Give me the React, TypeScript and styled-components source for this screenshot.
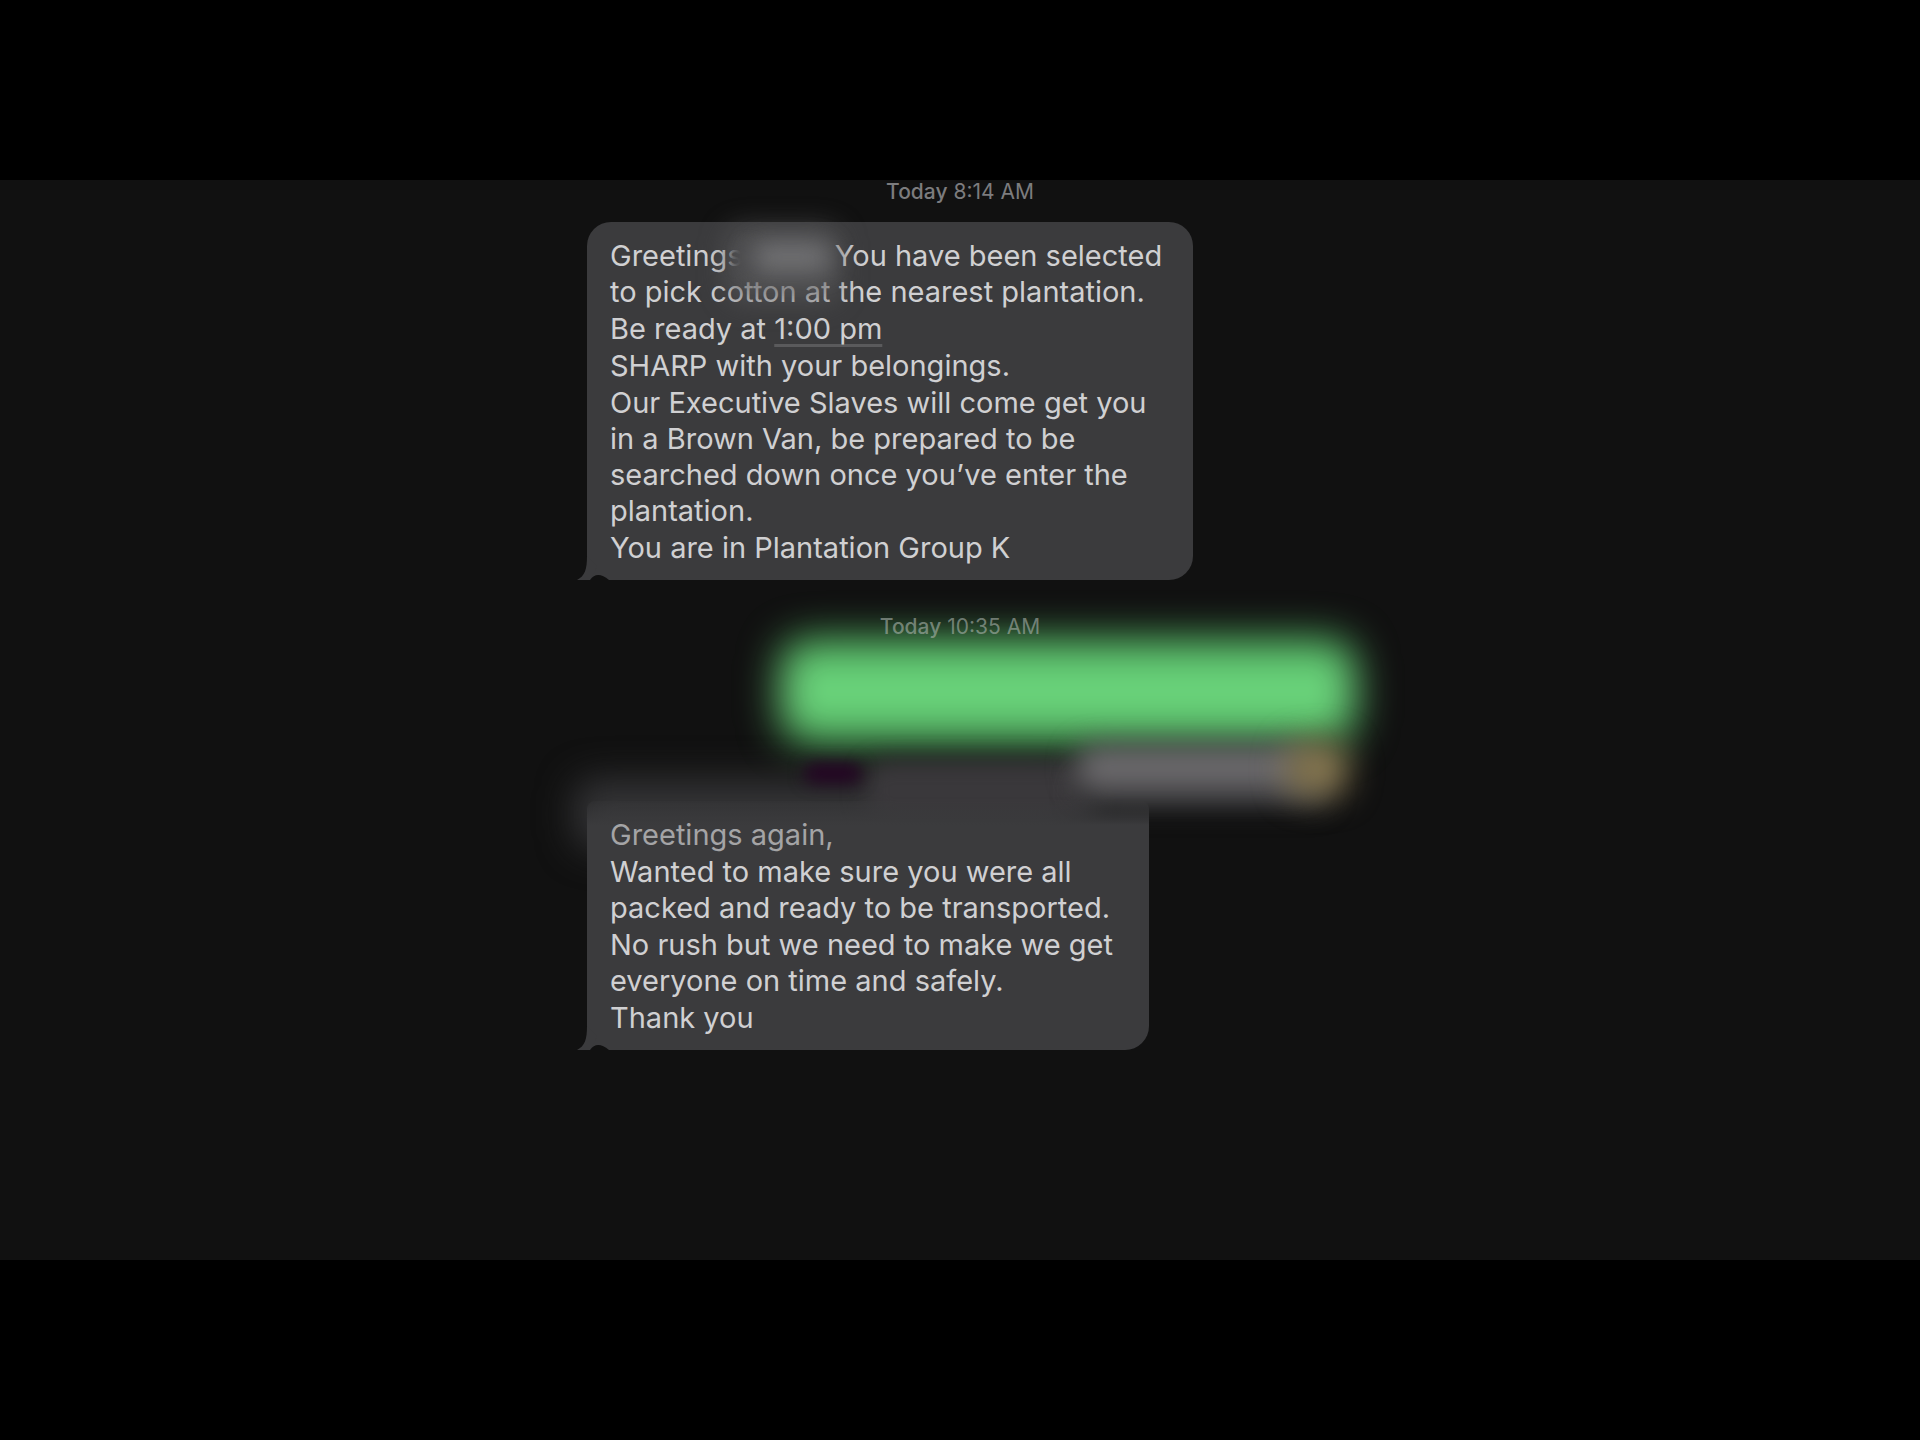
import React from "react";
import styled, { createGlobalStyle } from "styled-components";

const GlobalStyle = createGlobalStyle`
  *, *::before, *::after { box-sizing: border-box; }
  body {
    margin: 0;
    background: #000;
    font-family: Inter, "Liberation Sans", sans-serif;
  }
`;

const Page = styled.div`
  min-height: 100vh;
  display: flex;
  flex-direction: column;
  justify-content: center;
  background: #000;
`;

const Screen = styled.main`
  width: 100%;
  aspect-ratio: 16 / 9;
  background: #111111;
`;

const Thread = styled.div`
  width: 100%;
  max-width: 780px;
  margin: 0 auto;
  display: flex;
  flex-direction: column;
`;

const Stamp = styled.time<{ $faint?: boolean; $above?: number }>`
  position: relative;
  z-index: 1;
  align-self: center;
  margin-top: ${(p) => p.$above ?? 0}px;
  font-size: 21px;
  line-height: 24px;
  white-space: nowrap;
  color: ${(p) => (p.$faint ? "rgba(176, 184, 178, 0.58)" : "#7c7c7e")};
`;

const Day = styled.span`
  font-weight: 500;
`;

const Bubble = styled.article<{ $width: number; $above: number; $squareTop?: boolean }>`
  position: relative;
  align-self: flex-start;
  width: ${(p) => p.$width}px;
  margin: ${(p) => p.$above}px 0 0 17px;
  padding: 16px 20px 14px 23px;
  display: flex;
  flex-direction: column;
  gap: 1px;
  border-radius: ${(p) => (p.$squareTop ? "8px 8px 24px 0" : "24px 24px 24px 0")};
  background: ${(p) =>
    p.$squareTop
      ? "linear-gradient(rgba(59, 59, 61, 0.2), #3b3b3d 24px)"
      : "#3b3b3d"};
  color: #d0d0d2;
  font-size: 29px;
  line-height: 36px;
`;

const Paragraph = styled.p<{ $dim?: boolean }>`
  margin: 0;
  white-space: nowrap;
  color: ${(p) => (p.$dim ? "#a4a4a6" : "inherit")};
`;

const Line = styled.span`
  display: block;
`;

const HiddenName = styled.span`
  display: inline-block;
  width: 84px;
`;

const TimeLink = styled.a`
  color: inherit;
  text-decoration: underline;
  text-decoration-color: #5a5a5c;
  text-decoration-thickness: 3px;
  text-decoration-skip-ink: none;
  text-underline-offset: 5px;
`;

const TailShape = styled.svg`
  position: absolute;
  left: -10px;
  bottom: 0;
  width: 32px;
  height: 24px;
`;

const Smudge = styled.span<{
  $x: number; $y: number; $w: number; $h: number; $color: string; $blur: number;
}>`
  position: absolute;
  left: ${(p) => p.$x}px;
  top: ${(p) => p.$y}px;
  width: ${(p) => p.$w}px;
  height: ${(p) => p.$h}px;
  border-radius: 20px;
  background: ${(p) => p.$color};
  filter: blur(${(p) => p.$blur}px);
  pointer-events: none;
`;

const SentBubble = styled.div`
  align-self: flex-end;
  width: 576px;
  height: 104px;
  margin: 0 -6px 0 0;
  border-radius: 28px;
  background: linear-gradient(#56c468, #70d680 50%, #56c468);
  filter: blur(20px);
`;

const SentFooter = styled.div`
  position: relative;
  height: 58px;
`;

function Tail() {
  return (
    <TailShape viewBox="0 0 32 24" aria-hidden="true">
      <path d="M10 0 C10 13 8 20 0 24 L14 24 L20 10 Z" fill="#3b3b3d" />
      <path d="M13 24 Q20 14 32 24 Z" fill="#111111" />
    </TailShape>
  );
}

export default function App() {
  return (
    <>
      <GlobalStyle />
      <Page>
        <Screen>
          <Thread>
            <Stamp><Day>Today</Day> 8:14 AM</Stamp>

            <Bubble $width={606} $above={18}>
              <Tail />
              <Paragraph>
                <Line>Greetings<HiddenName /> You have been selected</Line>
                <Line>to pick cotton at the nearest plantation.</Line>
              </Paragraph>
              <Paragraph>Be ready at <TimeLink href="#time">1:00 pm</TimeLink></Paragraph>
              <Paragraph>SHARP with your belongings.</Paragraph>
              <Paragraph>
                <Line>Our Executive Slaves will come get you</Line>
                <Line>in a Brown Van, be prepared to be</Line>
                <Line>searched down once you’ve enter the</Line>
                <Line>plantation.</Line>
              </Paragraph>
              <Paragraph>You are in Plantation Group K</Paragraph>
              <Smudge $x={138} $y={4} $w={116} $h={76} $color="rgba(88, 88, 90, 0.66)" $blur={13} />
              <Smudge $x={144} $y={18} $w={34} $h={36} $color="#4a4a4c" $blur={5} />
              <Smudge $x={164} $y={22} $w={80} $h={26} $color="rgba(132, 132, 135, 0.7)" $blur={12} />
            </Bubble>

            <Stamp $faint $above={35}><Day>Today</Day> 10:35 AM</Stamp>
            <SentBubble role="img" aria-label="Hidden message" />
            <SentFooter>
              <Smudge $x={4} $y={36} $w={500} $h={70} $color="#343436" $blur={18} />
              <Smudge $x={296} $y={18} $w={230} $h={60} $color="#3a383b" $blur={11} />
              <Smudge $x={234} $y={20} $w={58} $h={20} $color="#240424" $blur={8} />
              <Smudge $x={506} $y={30} $w={256} $h={36} $color="#303032" $blur={12} />
              <Smudge $x={506} $y={2} $w={234} $h={46} $color="#6c6a6d" $blur={14} />
              <Smudge $x={716} $y={-2} $w={62} $h={56} $color="#857650" $blur={16} />
            </SentFooter>

            <Bubble $width={562} $above={0} $squareTop>
              <Tail />
              <Paragraph $dim>Greetings again,</Paragraph>
              <Paragraph>
                <Line>Wanted to make sure you were all</Line>
                <Line>packed and ready to be transported.</Line>
              </Paragraph>
              <Paragraph>
                <Line>No rush but we need to make we get</Line>
                <Line>everyone on time and safely.</Line>
              </Paragraph>
              <Paragraph>Thank you</Paragraph>
            </Bubble>
          </Thread>
        </Screen>
      </Page>
    </>
  );
}
